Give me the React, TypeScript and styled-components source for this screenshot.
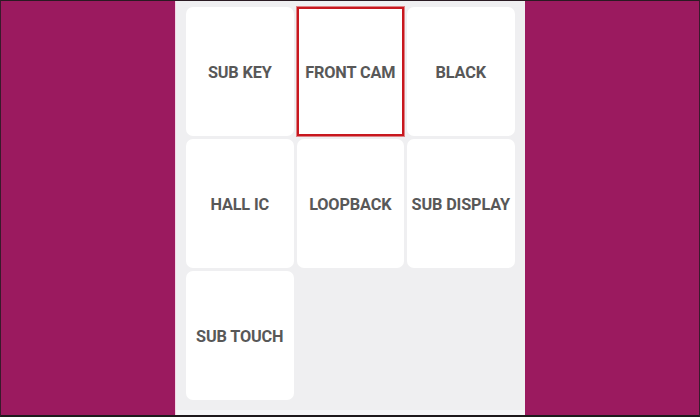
import React from "react";
import styled, { createGlobalStyle } from "styled-components";

const Global = createGlobalStyle`
  html, body { margin: 0; padding: 0; }
  body { width: 700px; height: 417px; overflow: hidden; background: #1d1d1f; }
  * { box-sizing: border-box; }
`;

const Frame = styled.div`
  width: 700px;
  height: 417px;
  border-top: 1px solid #2a1a22;
  border-bottom: 2px solid #1f1a1d;
  border-left: 1px solid #3a1a2c;
  border-right: 1px solid #3a1a2c;
  display: flex;
  background: #9b1a5f;
`;

const Side = styled.div`
  flex: 1;
  background: #9b1a5f;
`;

const Panel = styled.div`
  width: 350px;
  background: #efeff1;
  display: flex;
  flex-direction: column;
  border-left: 1px solid #f3d4e4;
`;

const Grid = styled.div`
  display: grid;
  grid-template-columns: repeat(3, 107.5px);
  grid-auto-rows: 129px;
  gap: 3px 3px;
  padding: 6px 10px 0 10px;
  flex: 1;
`;

const Footer = styled.div`
  height: 5px;
  background: #f6f6f8;
`;

const Card = styled.div<{ $selected?: boolean }>`
  background: #ffffff;
  border-radius: ${(p) => (p.$selected ? "0" : "7px")};
  border: ${(p) => (p.$selected ? "2px solid #c8171e" : "none")};
  box-shadow: ${(p) => (p.$selected ? "0 0 0 1px rgba(205, 40, 45, 0.55)" : "none")};
  display: flex;
  align-items: center;
  justify-content: center;
  padding-top: 2px;
  font-family: Roboto, "Liberation Sans", Arial, sans-serif;
  font-weight: 700;
  font-size: 16.3px;
  color: #585858;
  white-space: nowrap;
  letter-spacing: -0.15px;
`;

const items = [
  { label: "SUB KEY" },
  { label: "FRONT CAM", selected: true },
  { label: "BLACK" },
  { label: "HALL IC" },
  { label: "LOOPBACK" },
  { label: "SUB DISPLAY" },
  { label: "SUB TOUCH" },
];

export default function App() {
  return (
    <>
      <Global />
      <Frame>
        <Side />
        <Panel>
          <Grid>
            {items.map((it) => (
              <Card key={it.label} $selected={it.selected}>
                {it.label}
              </Card>
            ))}
          </Grid>
          <Footer />
        </Panel>
        <Side />
      </Frame>
    </>
  );
}
